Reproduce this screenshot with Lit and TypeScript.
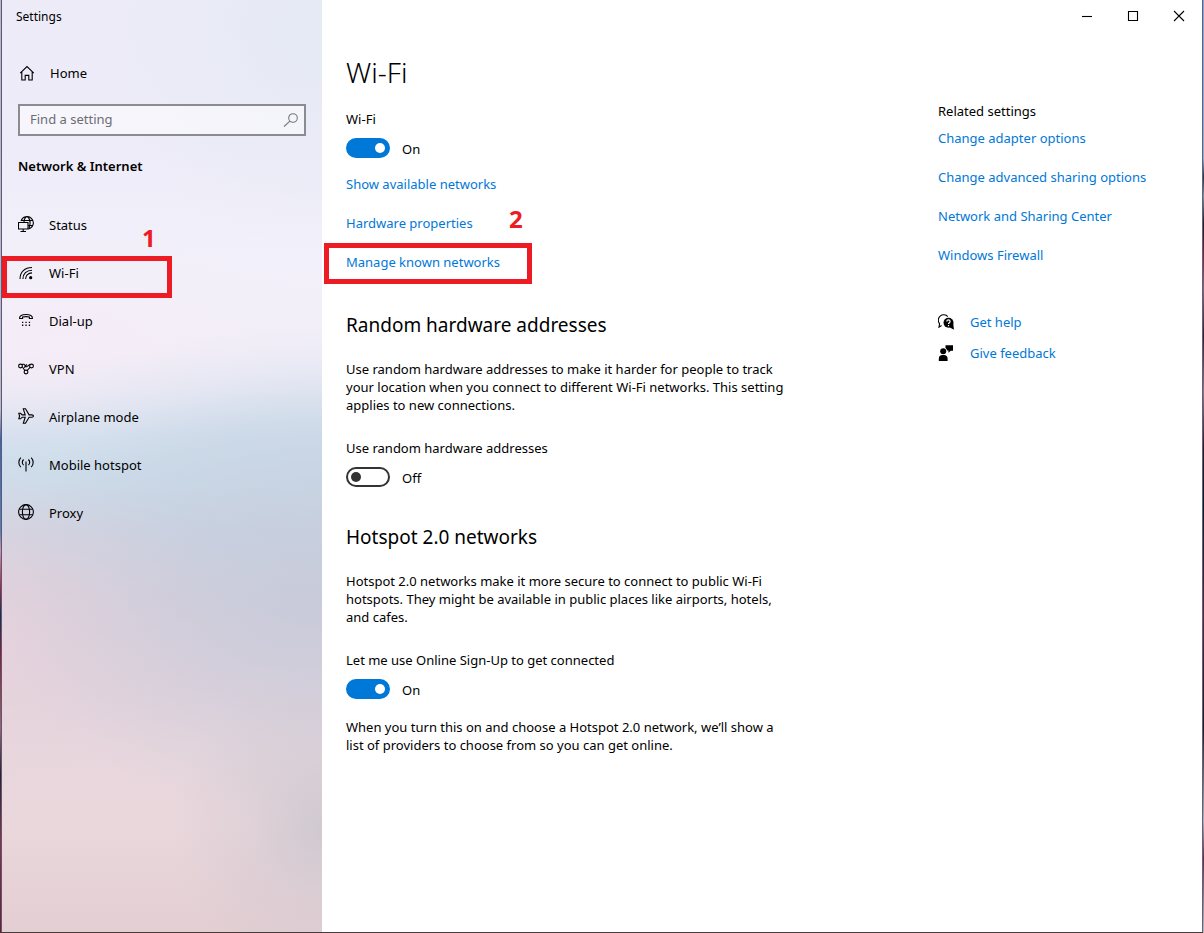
import { LitElement, html, css, svg, nothing } from "lit";
import { customElement, property, state } from "lit/decorators.js";

const icons = {
  home: svg`<path d="M1.2 8.2 8 1.6l6.800 6.600M2.8 7v8h3.400v-4.600h3.600V15h3.400V7"/>`,
  search: svg`<circle cx="11" cy="6" r="4.300"/><path d="M7.900 9.100 2 14.500"/>`,
  status: svg`<path d="M3 5A6.300 6.300 0 1 1 10.500 13M8.500.6C6.500 2 6 3.800 6 6M9.500.6c2 1.600 2.600 4 2.600 6.200s-.4 4-1.400 5.800M3.200 4.500h11.600M10 9.500h4.800"/><path d="M.5 6.500h9.500V13H.5zM5.200 13v2.500M2.500 15.500h5.500"/>`,
  wifi: svg`<path d="M2 15C2 7.800 6.800 3.500 14 3.500M4.900 15c0-5.300 3.600-8.800 9.100-8.800M7.600 15c0-3.700 2.600-6.100 6.400-6.100"/><circle class="solid" cx="12.700" cy="13.700" r="1.600"/>`,
  dialup: svg`<path d="M1.600 6.500C1.200 3.600 4 2.500 8 2.500s6.800 1.100 6.400 4h-3V5C9 4.500 7 4.500 4.600 5v1.500z"/><path class="solid" d="M4 9.800h1.300v1.300H4zM7.400 9.800h1.300v1.300H7.400zM10.800 9.800h1.300v1.300h-1.300zM4 12.600h1.300v1.300H4zM7.400 12.600h1.300v1.300H7.400zM10.800 12.600h1.300v1.300h-1.300z"/>`,
  vpn: svg`<circle cx="2.500" cy="6" r="1.900"/><circle cx="13.500" cy="6" r="1.900"/><circle cx="8" cy="12" r="1.900"/><path d="M3.800 4.600c1.700-.9 2.900-.2 3.200 1s1.200 1.600 2.200.8l2.600-1.900M4.300 6.800 6.800 10.500M8.800 4.400 6.200 7.600M12 7.300 9.200 10.500"/>`,
  airplane: svg`<path d="M.8 5.300h1.800l1.600 1.600h3L5.300.8h2.200l3.600 6.100h2.700c2.200 0 2.200 2.300 0 2.300h-2.700l-3.600 6.100H5.300l1.900-6.100h-3L2.600 10.800H.8L1.600 8z"/>`,
  hotspot: svg`<path d="M8 5.500V15.500M5.600 3.500c-1.500 1.600-1.500 4 0 5.600M10.400 3.500c1.500 1.600 1.500 4 0 5.600M2.800 1.700C.2 4.500.2 8.500 2.800 11.200M13.200 1.700c2.600 2.800 2.600 6.800 0 9.500"/>`,
  proxy: svg`<circle cx="8" cy="8" r="7.400"/><ellipse cx="8" cy="8" rx="3.600" ry="7.400"/><path d="M1.400 5.200h13.200M1.400 10.800h13.200"/>`,
  help: svg`<path d="M3.600 11.500 1 13.200l.6-3.500A5.200 5.200 0 1 1 9.800 2.600"/><circle class="solid" cx="10.500" cy="8.700" r="5"/><path class="solid" d="m11 13 5 2.700-.8-6z"/><path class="cut" d="M8.800 7.500c0-2.100 3.300-2.100 3.300 0 0 1.200-1.600 1.200-1.600 2.500M10.500 11v1.200"/>`,
  feedback: svg`<path class="solid" d="M7.500.2H15v5.500h-2.200l-2.400 2v-2.200H9A4 4 0 0 0 7.500 3zM.8 16v-2.300c0-2.300 1.500-3.600 3.500-3.600h1.800c2 0 3.500 1.300 3.500 3.600V16z"/><circle class="solid" cx="5.200" cy="6.300" r="3"/>`,
  minimize: svg`<path d="M3 8.500h10"/>`,
  maximize: svg`<path d="M3.500 3.500h9v9h-9z"/>`,
  close: svg`<path d="m3 3 10 10M13 3 3 13"/>`,
};
type IconName = keyof typeof icons;

@customElement("ui-icon")
class UiIcon extends LitElement {
  @property() name: IconName = "home";
  static styles = css`
    :host { display: block; flex: none; width: 16px; height: 16px; }
    svg { display: block; fill: none; stroke: currentColor; stroke-width: 1.1; }
    .solid { fill: currentColor; stroke: none; }
    .cut { stroke: #fff; stroke-width: 1.2; }
  `;
  render() {
    return html`<svg width="16" height="16" viewBox="0 0 16 16" aria-hidden="true">${icons[this.name]}</svg>`;
  }
}

@customElement("toggle-switch")
class ToggleSwitch extends LitElement {
  @property() label = "";
  @property({ type: Boolean }) on = false;
  static styles = css`
    :host { display: block; }
    .label { display: block; line-height: 20px; margin-bottom: 9px; }
    .row { display: flex; align-items: center; gap: 12px; height: 20px; line-height: 20px; }
    input {
      appearance: none; box-sizing: border-box; margin: 0; padding: 3px;
      width: 44px; height: 20px; border: 2px solid #333; border-radius: 10px;
      display: flex; align-items: center; background: #fff;
    }
    input::before { content: ""; width: 10px; height: 10px; border-radius: 50%; background: #333; }
    input:checked { background: #0078d7; border-color: #0078d7; justify-content: flex-end; }
    input:checked::before { background: #fff; }
    .state { padding-top: 2px; }
  `;
  render() {
    return html`
      <label class="label" for="switch">${this.label}</label>
      <div class="row">
        <input id="switch" type="checkbox" role="switch" .checked=${this.on}
          @change=${(e: Event) => (this.on = (e.target as HTMLInputElement).checked)} />
        <span class="state">${this.on ? "On" : "Off"}</span>
      </div>`;
  }
}

const pages: { icon: IconName; text: string; step?: string }[] = [
  { icon: "status", text: "Status" },
  { icon: "wifi", text: "Wi-Fi", step: "1" },
  { icon: "dialup", text: "Dial-up" },
  { icon: "vpn", text: "VPN" },
  { icon: "airplane", text: "Airplane mode" },
  { icon: "hotspot", text: "Mobile hotspot" },
  { icon: "proxy", text: "Proxy" },
];

@customElement("app-root")
class AppRoot extends LitElement {
  @state() private query = "";

  static styles = css`
    :host {
      display: block; box-sizing: border-box; min-height: 100vh;
      font: 13px/20px "Noto Sans", "Open Sans", sans-serif; color: #000;
    }
    * { box-sizing: border-box; }
    h1, h2, h3, p { margin: 0; font-weight: 400; }
    a { color: #0078d7; text-decoration: none; }
    .desktop {
      min-height: 100vh; display: flex; padding: 0 1px 1px;
      background:
        linear-gradient(#b9b5d2 0, #b9b5cc 40%, #c0b4c8 44%, #3d66ae 47%, #5a80b8 57%, #d090b0 59%, #a02848 63%, #1c2c50 66%, #8c1d35 70%, #a06070 78%, #2b2030 83%, #8c3048 90%, #701c30 100%) left / 1px 100% no-repeat,
        linear-gradient(#8aa4cc 0, #98aac8 17%, #30303c 19%, #8a8a94 21%, #301418 24%, #8c1828 27%, #a05868 31%, #501420 36%, #a86878 42%, #401018 48%, #181420 54%, #701c30 66%, #301018 78%, #c0a8b0 88%, #802038 92%, #c8b8bc 100%) right / 1px 100% no-repeat,
        #4a3a3c;
    }
    .window {
      flex: 1; display: grid; grid-template-columns: 320px 1fr; min-width: 0;
      border-left: 1px solid #5c5a70; border-right: 1px solid #51678a; background: #fff;
    }
    .sidebar {
      padding-bottom: 24px;
      background:
        radial-gradient(150px 160px at 100% 89%, #cbc6ced0, #cbc6ce50 50%, #cbc6ce00),
        radial-gradient(340px 220px at 100% 64%, #c5c9d9d0, #c5c9d970 50%, #c5c9d900),
        radial-gradient(260px 170px at 0 68%, #e8d2dcd0, #e8d2dc70 50%, #e8d2dc00),
        radial-gradient(340px 150px at 100% 51%, #c7dbeaa0, #c7dbea50 50%, #c7dbea00),
        radial-gradient(260px 120px at 20% 37%, #f6ebf6a0, #f6ebf640 50%, #f6ebf600),
        radial-gradient(240px 220px at 100% 3%, #e5eaf5, #e5eaf580 50%, #e5eaf500),
        linear-gradient(#edebf7 0, #eeecf8 16%, #f2f0fa 28%, #f2eef8 38%, #e9e9f4 42%, #d3dfed 47%, #cddcea 52%, #ccd4e3 57%, #d6d1dd 64%, #e0d3dc 72%, #e8d7dd 80%, #e9d7dc 89%, #e3ced3 100%);
    }
    .title { height: 32px; padding: 7px 14px; font-size: 12px; }
    .home { display: flex; align-items: center; gap: 15px; height: 48px; margin-top: 17px; padding-left: 17px; color: inherit; }
    .search {
      display: flex; align-items: center; height: 32px; margin: 7px 16px 20px; padding: 0 6px 0 10px;
      border: 2px solid #8c8b92; background: #ffffff80; color: #777;
    }
    .search input {
      flex: 1; min-width: 0; height: 28px; padding: 0 0 2px; border: 0; outline: 0; background: none; font: inherit; color: #000;
    }
    .search input::placeholder { color: #6d6c72; opacity: 1; }
    .group { padding-left: 16px; font-size: 13px; font-weight: 600; line-height: 20px; margin-bottom: 25px; }
    .item { position: relative; display: flex; align-items: center; gap: 15px; height: 48px; padding-left: 16px; color: inherit; }
    .item ui-icon { margin-bottom: 2px; }
    .mark { position: absolute; border: 5px solid #ed1c24; pointer-events: none; }
    .step { position: absolute; color: #ed1c24; font-size: 24px; font-weight: 700; line-height: 28px; pointer-events: none; }
    .item .mark { left: 0; top: 7px; width: 170px; height: 42px; }
    .item .step { left: 140px; top: -25px; }
    .content { display: flex; flex-direction: column; min-width: 0; }
    .controls { display: flex; justify-content: flex-end; height: 32px; }
    .controls button {
      width: 46px; height: 32px; padding: 0; border: 0; background: none; color: #000;
      display: flex; align-items: center; justify-content: center;
    }
    .columns { display: grid; grid-template-columns: 1fr 264px; padding-left: 24px; }
    .main { padding: 20px 0 40px; }
    h1 { font-size: 28px; font-weight: 300; line-height: 40px; margin-bottom: 17px; }
    h2 { font-size: 19px; line-height: 28px; margin-bottom: 21px; }
    .text { max-width: 448px; line-height: 18px; }
    .links { display: flex; flex-direction: column; align-items: flex-start; gap: 19px; }
    .main .links { margin: 16px 0 39px; }
    .target { position: relative; }
    .target .mark { left: -22px; top: -9px; width: 208px; height: 41px; }
    .target .step { left: 163px; top: -47px; }
    .block { margin-bottom: 36px; }
    .block toggle-switch { margin: 24px 0 19px; }
    .related { padding-top: 69px; }
    .related h3 { font-size: 13px; line-height: 20px; margin-bottom: 7px; }
    .support { display: grid; gap: 11px; margin-top: 47px; }
    .support a { display: flex; align-items: center; gap: 16px; }
    .support ui-icon { color: #000; }
  `;

  private step(n: string) {
    return html`<span class="mark"></span><span class="step">${n}</span>`;
  }

  render() {
    return html`
      <div class="desktop">
        <div class="window">
          <nav class="sidebar" aria-label="Settings">
            <div class="title">Settings</div>
            <a class="home" href="#home"><ui-icon name="home"></ui-icon>Home</a>
            <label class="search">
              <input type="text" placeholder="Find a setting" aria-label="Find a setting" .value=${this.query}
                @input=${(e: Event) => (this.query = (e.target as HTMLInputElement).value)} />
              <ui-icon name="search"></ui-icon>
            </label>
            <h2 class="group">Network &amp; Internet</h2>
            ${pages.map((p) => html`
              <a class="item" href="#${p.icon}"><ui-icon name=${p.icon}></ui-icon>${p.text}${p.step ? this.step(p.step) : nothing}</a>`)}
          </nav>
          <div class="content">
            <div class="controls">
              <button aria-label="Minimize"><ui-icon name="minimize"></ui-icon></button>
              <button aria-label="Maximize"><ui-icon name="maximize"></ui-icon></button>
              <button aria-label="Close"><ui-icon name="close"></ui-icon></button>
            </div>
            <div class="columns">
              <main class="main">
                <h1>Wi-Fi</h1>
                <toggle-switch label="Wi-Fi" on></toggle-switch>
                <div class="links">
                  <a href="#available">Show available networks</a>
                  <a href="#hardware">Hardware properties</a>
                  <a class="target" href="#known">Manage known networks${this.step("2")}</a>
                </div>
                <section class="block">
                  <h2>Random hardware addresses</h2>
                  <p class="text">Use random hardware addresses to make it harder for people to track your location when you connect to different Wi-Fi networks. This setting applies to new connections.</p>
                  <toggle-switch label="Use random hardware addresses"></toggle-switch>
                </section>
                <section class="block">
                  <h2>Hotspot 2.0 networks</h2>
                  <p class="text">Hotspot 2.0 networks make it more secure to connect to public Wi-Fi hotspots. They might be available in public places like airports, hotels, and cafes.</p>
                  <toggle-switch label="Let me use Online Sign-Up to get connected" on></toggle-switch>
                  <p class="text">When you turn this on and choose a Hotspot 2.0 network, we’ll show a list of providers to choose from so you can get online.</p>
                </section>
              </main>
              <aside class="related">
                <h3>Related settings</h3>
                <div class="links">
                  <a href="#adapter">Change adapter options</a>
                  <a href="#sharing">Change advanced sharing options</a>
                  <a href="#center">Network and Sharing Center</a>
                  <a href="#firewall">Windows Firewall</a>
                </div>
                <div class="support">
                  <a href="#help"><ui-icon name="help"></ui-icon>Get help</a>
                  <a href="#feedback"><ui-icon name="feedback"></ui-icon>Give feedback</a>
                </div>
              </aside>
            </div>
          </div>
        </div>
      </div>`;
  }
}
